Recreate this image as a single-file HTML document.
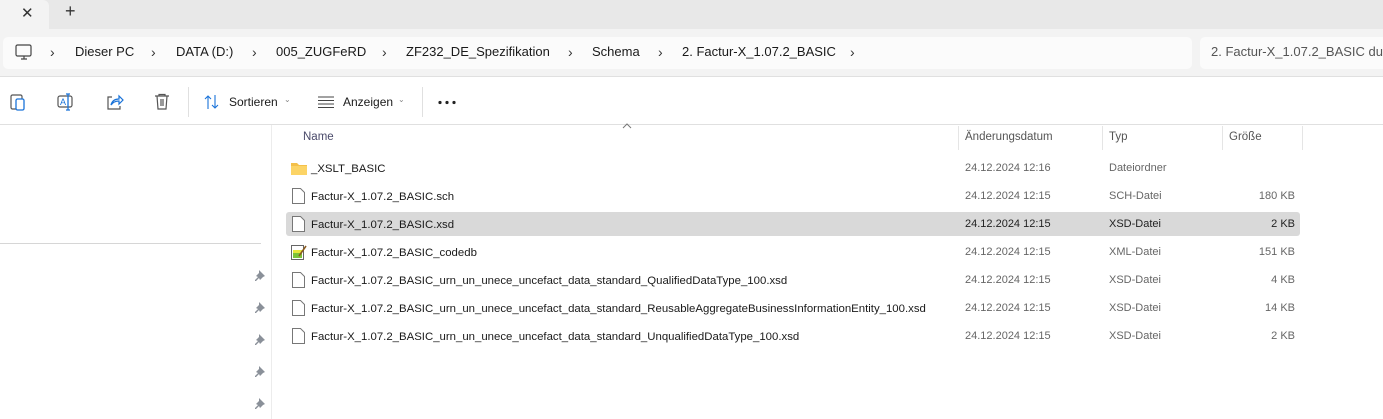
<!DOCTYPE html>
<html><head><meta charset="utf-8"><style>
*{margin:0;padding:0;box-sizing:border-box}
body{width:1383px;height:419px;overflow:hidden;background:#fff;font-family:"Segoe UI","Liberation Sans",sans-serif;font-size:11.4px;color:#1a1a1a;position:relative}
.a{position:absolute;white-space:nowrap}
.bc{font-size:13px;color:#1a1a1a;top:44px}
.cv{font-size:14px;color:#333;top:44px}
.g{color:#666;font-size:11px}
.sz{color:#666;font-size:11px;text-align:right;width:80px}
.n{top:3px}
.sep{position:absolute;top:126px;width:1px;height:24px;background:#e5e5e5}
</style></head><body>
<div class="a" style="left:0;top:0;width:1383px;height:29px;background:#e8e8e8"></div>
<div class="a" style="left:0;top:0;width:49px;height:29px;background:#f3f3f3;border-top-right-radius:6px"></div>
<div class="a" style="left:21px;top:4px;font-size:15px;color:#333">✕</div>
<div class="a" style="left:65px;top:1px;font-size:18px;color:#333">+</div>
<div class="a" style="left:0;top:29px;width:1383px;height:48px;background:#f3f3f3;border-bottom:1px solid #e0e0e0"></div>
<div class="a" style="left:3px;top:37px;width:1189px;height:32px;background:#fbfbfb;border-radius:5px"></div>
<div class="a" style="left:1200px;top:37px;width:190px;height:32px;background:#fbfbfb;border-radius:5px"></div>
<svg class="a" style="left:15px;top:44px" width="18" height="17"><rect x="1" y="1" width="15" height="11" rx="1.5" fill="none" stroke="#444" stroke-width="1.2"/><path d="M6 15h6M9 12v3" stroke="#444" stroke-width="1.2"/></svg>
<div class="a cv" style="left:50px">›</div>
<div class="a bc" style="left:75px">Dieser PC</div>
<div class="a cv" style="left:151px">›</div>
<div class="a bc" style="left:176px">DATA (D:)</div>
<div class="a cv" style="left:252px">›</div>
<div class="a bc" style="left:276px">005_ZUGFeRD</div>
<div class="a cv" style="left:382px">›</div>
<div class="a bc" style="left:406px">ZF232_DE_Spezifikation</div>
<div class="a cv" style="left:568px">›</div>
<div class="a bc" style="left:592px">Schema</div>
<div class="a cv" style="left:658px">›</div>
<div class="a bc" style="left:682px">2. Factur-X_1.07.2_BASIC</div>
<div class="a cv" style="left:850px">›</div>
<div class="a bc" style="left:1211px;color:#555">2. Factur-X_1.07.2_BASIC durchsuchen</div>
<div class="a" style="left:0;top:124px;width:1383px;height:1px;background:#e0e0e0"></div>
<svg class="a" style="left:9px;top:93px" width="20" height="18"><rect x="2" y="2" width="11" height="14" rx="1.5" fill="none" stroke="#555" stroke-width="1.2"/><rect x="7" y="6" width="8" height="11" rx="1.5" fill="#fff" stroke="#1a73d9" stroke-width="1.3"/></svg>
<svg class="a" style="left:56px;top:92px" width="20" height="20"><rect x="2" y="4" width="14" height="11" rx="2" fill="none" stroke="#555" stroke-width="1.2"/><text x="4" y="13" font-size="9" fill="#1a73d9" font-family="Liberation Sans">A</text><path d="M12 2v16M10 2h4M10 18h4" stroke="#1a73d9" stroke-width="1.3"/></svg>
<svg class="a" style="left:105px;top:93px" width="20" height="18"><path d="M7 4H3v12h12v-3" fill="none" stroke="#555" stroke-width="1.2"/><path d="M6 12c1-4 4-6 8-6V3l4 4-4 4V8c-3 0-6 1-8 4z" fill="none" stroke="#1a73d9" stroke-width="1.2"/></svg>
<svg class="a" style="left:153px;top:93px" width="18" height="18"><path d="M2 3h14M6 3V1.5h6V3M4 3l1 13h8l1-13M8 6v7M10 6v7" fill="none" stroke="#555" stroke-width="1.2"/></svg>
<div class="a" style="left:188px;top:87px;width:1px;height:30px;background:#e0e0e0"></div>
<svg class="a" style="left:204px;top:94px" width="16" height="16"><path d="M4 15V2M1 5l3-3 3 3M11 1v13M8 11l3 3 3-3" fill="none" stroke="#1a73d9" stroke-width="1.1"/></svg>
<div class="a" style="left:229px;top:95px;font-size:12px">Sortieren</div>
<div class="a" style="left:284px;top:95px;font-size:8px;color:#888">⌄</div>
<svg class="a" style="left:318px;top:96px" width="16" height="12"><path d="M0 1h16M0 4.5h16M0 8h16M0 11.5h16" stroke="#444" stroke-width="1"/></svg>
<div class="a" style="left:343px;top:95px;font-size:12px">Anzeigen</div>
<div class="a" style="left:398px;top:95px;font-size:8px;color:#888">⌄</div>
<div class="a" style="left:422px;top:87px;width:1px;height:30px;background:#e0e0e0"></div>
<svg class="a" style="left:438px;top:100px" width="20" height="5"><circle cx="2" cy="2.5" r="1.6" fill="#222"/><circle cx="9" cy="2.5" r="1.6" fill="#222"/><circle cx="16" cy="2.5" r="1.6" fill="#222"/></svg>
<div class="a" style="left:271px;top:125px;width:1px;height:294px;background:#ececec"></div>
<div class="a" style="left:0;top:243px;width:261px;height:1px;background:#d6d6d6"></div>
<svg width="0" height="0" style="position:absolute"><defs><g id="pin"><path d="M5 1l6 6-2 1-3 3-1-2-3 3-1 0 0-1 3-3-2-1 3-3z" fill="#8a9099"/></g></defs></svg>
<svg class="a" style="left:254px;top:269px" width="12" height="12"><use href="#pin"/></svg>
<svg class="a" style="left:254px;top:301px" width="12" height="12"><use href="#pin"/></svg>
<svg class="a" style="left:254px;top:333px" width="12" height="12"><use href="#pin"/></svg>
<svg class="a" style="left:254px;top:365px" width="12" height="12"><use href="#pin"/></svg>
<svg class="a" style="left:254px;top:397px" width="12" height="12"><use href="#pin"/></svg>
<svg class="a" style="left:622px;top:123px" width="10" height="6"><path d="M1 5l4-4 4 4" fill="none" stroke="#777"/></svg>
<div class="a" style="left:303px;top:131px;font-size:11.5px;color:#4a4a6a">Name</div>
<div class="sep" style="left:958px"></div><div class="sep" style="left:1102px"></div><div class="sep" style="left:1222px"></div><div class="sep" style="left:1302px"></div>
<div class="a" style="left:965px;top:131px;font-size:11.5px;color:#555">Änderungsdatum</div>
<div class="a" style="left:1109px;top:131px;font-size:11.5px;color:#555">Typ</div>
<div class="a" style="left:1229px;top:131px;font-size:11.5px;color:#555">Größe</div>
<div class="a" style="left:286px;top:212px;width:1014px;height:24px;background:#d9d9d9;border-radius:3px"></div>
<svg class="a" style="left:290px;top:160px" width="18" height="16"><path d="M1 3h6l2 2h8v10H1z" fill="#f4c04a"/><path d="M1 6h16v9H1z" fill="#fcd466"/></svg>
<div class="a" style="left:311px;top:163px">_XSLT_BASIC</div>
<div class="a g" style="left:965px;top:162px">24.12.2024 12:16</div>
<div class="a g" style="left:1109px;top:162px">Dateiordner</div>
<div class="a" style="left:0;top:188px;width:1383px">
<svg class="a" style="left:292px;top:0" width="13" height="16"><path d="M.5.5h8l4 4v11H.5z" fill="#fff" stroke="#777"/></svg>
<div class="a n" style="left:311px">Factur-X_1.07.2_BASIC.sch</div>
<div class="a g" style="left:965px;top:2px">24.12.2024 12:15</div><div class="a g" style="left:1109px;top:2px">SCH-Datei</div><div class="a sz" style="left:1215px;top:2px">180 KB</div></div>
<div class="a" style="left:0;top:216px;width:1383px">
<svg class="a" style="left:292px;top:0" width="13" height="16"><path d="M.5.5h8l4 4v11H.5z" fill="#fff" stroke="#777"/></svg>
<div class="a n" style="left:311px">Factur-X_1.07.2_BASIC.xsd</div>
<div class="a g" style="left:965px;top:2px;color:#222">24.12.2024 12:15</div><div class="a g" style="left:1109px;top:2px;color:#222">XSD-Datei</div><div class="a sz" style="left:1215px;top:2px;color:#222">2 KB</div></div>
<div class="a" style="left:0;top:244px;width:1383px">
<svg class="a" style="left:291px;top:0" width="16" height="16"><rect x=".5" y="1.5" width="12" height="14" fill="#fff" stroke="#666"/><rect x="2" y="8" width="9" height="6" fill="#7cc23a"/><rect x="2" y="6" width="9" height="3" fill="#e6e63a"/><path d="M8 12l7-10" stroke="#8a5a20" stroke-width="1.6"/></svg>
<div class="a n" style="left:311px">Factur-X_1.07.2_BASIC_codedb</div>
<div class="a g" style="left:965px;top:2px">24.12.2024 12:15</div><div class="a g" style="left:1109px;top:2px">XML-Datei</div><div class="a sz" style="left:1215px;top:2px">151 KB</div></div>
<div class="a" style="left:0;top:272px;width:1383px">
<svg class="a" style="left:292px;top:0" width="13" height="16"><path d="M.5.5h8l4 4v11H.5z" fill="#fff" stroke="#777"/></svg>
<div class="a n" style="left:311px">Factur-X_1.07.2_BASIC_urn_un_unece_uncefact_data_standard_QualifiedDataType_100.xsd</div>
<div class="a g" style="left:965px;top:2px">24.12.2024 12:15</div><div class="a g" style="left:1109px;top:2px">XSD-Datei</div><div class="a sz" style="left:1215px;top:2px">4 KB</div></div>
<div class="a" style="left:0;top:300px;width:1383px">
<svg class="a" style="left:292px;top:0" width="13" height="16"><path d="M.5.5h8l4 4v11H.5z" fill="#fff" stroke="#777"/></svg>
<div class="a n" style="left:311px">Factur-X_1.07.2_BASIC_urn_un_unece_uncefact_data_standard_ReusableAggregateBusinessInformationEntity_100.xsd</div>
<div class="a g" style="left:965px;top:2px">24.12.2024 12:15</div><div class="a g" style="left:1109px;top:2px">XSD-Datei</div><div class="a sz" style="left:1215px;top:2px">14 KB</div></div>
<div class="a" style="left:0;top:328px;width:1383px">
<svg class="a" style="left:292px;top:0" width="13" height="16"><path d="M.5.5h8l4 4v11H.5z" fill="#fff" stroke="#777"/></svg>
<div class="a n" style="left:311px">Factur-X_1.07.2_BASIC_urn_un_unece_uncefact_data_standard_UnqualifiedDataType_100.xsd</div>
<div class="a g" style="left:965px;top:2px">24.12.2024 12:15</div><div class="a g" style="left:1109px;top:2px">XSD-Datei</div><div class="a sz" style="left:1215px;top:2px">2 KB</div></div>
</body></html>
